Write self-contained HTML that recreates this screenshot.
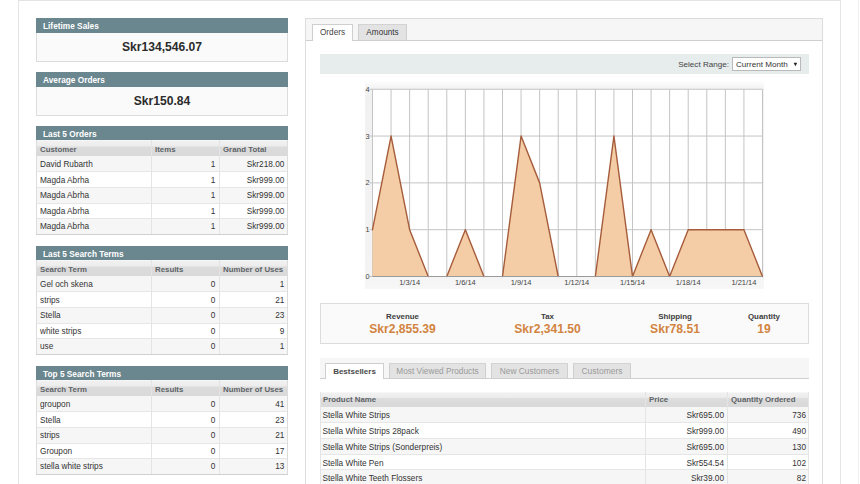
<!DOCTYPE html>
<html><head><meta charset="utf-8"><style>
html,body{margin:0;padding:0;}
html{background:#fff;}
body{width:860px;height:484px;overflow:hidden;position:relative;background:#fff;font-family:"Liberation Sans", sans-serif;}
body>div,body>svg{position:absolute;}
</style></head><body>
<div style="left:18px;top:0px;width:823px;height:1px;background:#e4e4e4"></div>
<div style="left:18px;top:0px;width:1px;height:484px;background:#e4e4e4"></div>
<div style="left:840px;top:0px;width:1px;height:484px;background:#e4e4e4"></div>
<div style="left:858px;top:0px;width:1px;height:484px;background:#f1f1f1"></div>
<div style="left:36px;top:18px;width:252px;height:15px;background:#6a868e;"></div>
<div style="top:21.57px;font-size:8.3px;line-height:8.3px;font-weight:700;color:#ffffff;white-space:nowrap;left:43px;">Lifetime Sales</div>
<div style="left:36px;top:33px;width:252px;height:29px;background:#fafafa;"></div>
<div style="left:36px;top:33px;width:1px;height:29px;background:#dcdcdc"></div>
<div style="left:287px;top:33px;width:1px;height:29px;background:#dcdcdc"></div>
<div style="left:36px;top:61px;width:252px;height:1px;background:#dcdcdc"></div>
<div style="top:40.76px;font-size:12.1px;line-height:12.1px;font-weight:700;color:#2b2b2b;white-space:nowrap;left:-38.0px;width:400px;text-align:center;">Skr134,546.07</div>
<div style="left:36px;top:72px;width:252px;height:15px;background:#6a868e;"></div>
<div style="top:75.57px;font-size:8.3px;line-height:8.3px;font-weight:700;color:#ffffff;white-space:nowrap;left:43px;">Average Orders</div>
<div style="left:36px;top:87px;width:252px;height:29px;background:#fafafa;"></div>
<div style="left:36px;top:87px;width:1px;height:29px;background:#dcdcdc"></div>
<div style="left:287px;top:87px;width:1px;height:29px;background:#dcdcdc"></div>
<div style="left:36px;top:115px;width:252px;height:1px;background:#dcdcdc"></div>
<div style="top:94.76px;font-size:12.1px;line-height:12.1px;font-weight:700;color:#2b2b2b;white-space:nowrap;left:-38.0px;width:400px;text-align:center;">Skr150.84</div>
<div style="left:36px;top:126px;width:252px;height:14px;background:#6a868e;"></div>
<div style="top:129.57px;font-size:8.3px;line-height:8.3px;font-weight:700;color:#ffffff;white-space:nowrap;left:43px;">Last 5 Orders</div>
<div style="left:36px;top:140px;width:252px;height:16px;background:linear-gradient(#fbfbfb 0%,#f0f0f0 8%,#ededed 35%,#dcdcdc 45%,#d9d9d9 100%);"></div>
<div style="top:145.55px;font-size:7.85px;line-height:7.85px;font-weight:700;color:#5d6367;white-space:nowrap;left:40px;">Customer</div>
<div style="top:145.55px;font-size:7.85px;line-height:7.85px;font-weight:700;color:#5d6367;white-space:nowrap;left:155px;">Items</div>
<div style="top:145.55px;font-size:7.85px;line-height:7.85px;font-weight:700;color:#5d6367;white-space:nowrap;left:223px;">Grand Total</div>
<div style="left:36px;top:156px;width:252px;height:16px;background:#f6f6f6;"></div>
<div style="left:36px;top:171px;width:252px;height:1px;background:#e6e6e6"></div>
<div style="top:161.02px;font-size:8.25px;line-height:8.25px;font-weight:400;color:#333333;white-space:nowrap;left:40px;">David Rubarth</div>
<div style="top:161.02px;font-size:8.25px;line-height:8.25px;font-weight:400;color:#333333;white-space:nowrap;right:644.7px;text-align:right;">1</div>
<div style="top:161.02px;font-size:8.25px;line-height:8.25px;font-weight:400;color:#333333;white-space:nowrap;right:575.7px;text-align:right;">Skr218.00</div>
<div style="left:36px;top:172px;width:252px;height:16px;background:#ffffff;"></div>
<div style="left:36px;top:187px;width:252px;height:1px;background:#e6e6e6"></div>
<div style="top:176.52px;font-size:8.25px;line-height:8.25px;font-weight:400;color:#333333;white-space:nowrap;left:40px;">Magda Abrha</div>
<div style="top:176.52px;font-size:8.25px;line-height:8.25px;font-weight:400;color:#333333;white-space:nowrap;right:644.7px;text-align:right;">1</div>
<div style="top:176.52px;font-size:8.25px;line-height:8.25px;font-weight:400;color:#333333;white-space:nowrap;right:575.7px;text-align:right;">Skr999.00</div>
<div style="left:36px;top:188px;width:252px;height:16px;background:#f6f6f6;"></div>
<div style="left:36px;top:203px;width:252px;height:1px;background:#e6e6e6"></div>
<div style="top:192.02px;font-size:8.25px;line-height:8.25px;font-weight:400;color:#333333;white-space:nowrap;left:40px;">Magda Abrha</div>
<div style="top:192.02px;font-size:8.25px;line-height:8.25px;font-weight:400;color:#333333;white-space:nowrap;right:644.7px;text-align:right;">1</div>
<div style="top:192.02px;font-size:8.25px;line-height:8.25px;font-weight:400;color:#333333;white-space:nowrap;right:575.7px;text-align:right;">Skr999.00</div>
<div style="left:36px;top:204px;width:252px;height:15px;background:#ffffff;"></div>
<div style="left:36px;top:218px;width:252px;height:1px;background:#e6e6e6"></div>
<div style="top:207.52px;font-size:8.25px;line-height:8.25px;font-weight:400;color:#333333;white-space:nowrap;left:40px;">Magda Abrha</div>
<div style="top:207.52px;font-size:8.25px;line-height:8.25px;font-weight:400;color:#333333;white-space:nowrap;right:644.7px;text-align:right;">1</div>
<div style="top:207.52px;font-size:8.25px;line-height:8.25px;font-weight:400;color:#333333;white-space:nowrap;right:575.7px;text-align:right;">Skr999.00</div>
<div style="left:36px;top:219px;width:252px;height:16px;background:#f6f6f6;"></div>
<div style="left:36px;top:234px;width:252px;height:1px;background:#e6e6e6"></div>
<div style="top:223.02px;font-size:8.25px;line-height:8.25px;font-weight:400;color:#333333;white-space:nowrap;left:40px;">Magda Abrha</div>
<div style="top:223.02px;font-size:8.25px;line-height:8.25px;font-weight:400;color:#333333;white-space:nowrap;right:644.7px;text-align:right;">1</div>
<div style="top:223.02px;font-size:8.25px;line-height:8.25px;font-weight:400;color:#333333;white-space:nowrap;right:575.7px;text-align:right;">Skr999.00</div>
<div style="left:151px;top:140px;width:1px;height:95px;background:#e3e5e5"></div>
<div style="left:219px;top:140px;width:1px;height:95px;background:#e3e5e5"></div>
<div style="left:36px;top:140px;width:1px;height:95px;background:#dcdcdc"></div>
<div style="left:287px;top:140px;width:1px;height:95px;background:#dcdcdc"></div>
<div style="left:36px;top:234px;width:252px;height:1px;background:#d0d0d0"></div>
<div style="left:36px;top:246px;width:252px;height:14px;background:#6a868e;"></div>
<div style="top:249.57px;font-size:8.3px;line-height:8.3px;font-weight:700;color:#ffffff;white-space:nowrap;left:43px;">Last 5 Search Terms</div>
<div style="left:36px;top:260px;width:252px;height:16px;background:linear-gradient(#fbfbfb 0%,#f0f0f0 8%,#ededed 35%,#dcdcdc 45%,#d9d9d9 100%);"></div>
<div style="top:265.55px;font-size:7.85px;line-height:7.85px;font-weight:700;color:#5d6367;white-space:nowrap;left:40px;">Search Term</div>
<div style="top:265.55px;font-size:7.85px;line-height:7.85px;font-weight:700;color:#5d6367;white-space:nowrap;left:155px;">Results</div>
<div style="top:265.55px;font-size:7.85px;line-height:7.85px;font-weight:700;color:#5d6367;white-space:nowrap;left:223px;">Number of Uses</div>
<div style="left:36px;top:276px;width:252px;height:16px;background:#f6f6f6;"></div>
<div style="left:36px;top:291px;width:252px;height:1px;background:#e6e6e6"></div>
<div style="top:281.02px;font-size:8.25px;line-height:8.25px;font-weight:400;color:#333333;white-space:nowrap;left:40px;">Gel och skena</div>
<div style="top:281.02px;font-size:8.25px;line-height:8.25px;font-weight:400;color:#333333;white-space:nowrap;right:644.7px;text-align:right;">0</div>
<div style="top:281.02px;font-size:8.25px;line-height:8.25px;font-weight:400;color:#333333;white-space:nowrap;right:575.7px;text-align:right;">1</div>
<div style="left:36px;top:292px;width:252px;height:16px;background:#ffffff;"></div>
<div style="left:36px;top:307px;width:252px;height:1px;background:#e6e6e6"></div>
<div style="top:296.52px;font-size:8.25px;line-height:8.25px;font-weight:400;color:#333333;white-space:nowrap;left:40px;">strips</div>
<div style="top:296.52px;font-size:8.25px;line-height:8.25px;font-weight:400;color:#333333;white-space:nowrap;right:644.7px;text-align:right;">0</div>
<div style="top:296.52px;font-size:8.25px;line-height:8.25px;font-weight:400;color:#333333;white-space:nowrap;right:575.7px;text-align:right;">21</div>
<div style="left:36px;top:308px;width:252px;height:16px;background:#f6f6f6;"></div>
<div style="left:36px;top:323px;width:252px;height:1px;background:#e6e6e6"></div>
<div style="top:312.02px;font-size:8.25px;line-height:8.25px;font-weight:400;color:#333333;white-space:nowrap;left:40px;">Stella</div>
<div style="top:312.02px;font-size:8.25px;line-height:8.25px;font-weight:400;color:#333333;white-space:nowrap;right:644.7px;text-align:right;">0</div>
<div style="top:312.02px;font-size:8.25px;line-height:8.25px;font-weight:400;color:#333333;white-space:nowrap;right:575.7px;text-align:right;">23</div>
<div style="left:36px;top:324px;width:252px;height:15px;background:#ffffff;"></div>
<div style="left:36px;top:338px;width:252px;height:1px;background:#e6e6e6"></div>
<div style="top:327.52px;font-size:8.25px;line-height:8.25px;font-weight:400;color:#333333;white-space:nowrap;left:40px;">white strips</div>
<div style="top:327.52px;font-size:8.25px;line-height:8.25px;font-weight:400;color:#333333;white-space:nowrap;right:644.7px;text-align:right;">0</div>
<div style="top:327.52px;font-size:8.25px;line-height:8.25px;font-weight:400;color:#333333;white-space:nowrap;right:575.7px;text-align:right;">9</div>
<div style="left:36px;top:339px;width:252px;height:16px;background:#f6f6f6;"></div>
<div style="left:36px;top:354px;width:252px;height:1px;background:#e6e6e6"></div>
<div style="top:343.02px;font-size:8.25px;line-height:8.25px;font-weight:400;color:#333333;white-space:nowrap;left:40px;">use</div>
<div style="top:343.02px;font-size:8.25px;line-height:8.25px;font-weight:400;color:#333333;white-space:nowrap;right:644.7px;text-align:right;">0</div>
<div style="top:343.02px;font-size:8.25px;line-height:8.25px;font-weight:400;color:#333333;white-space:nowrap;right:575.7px;text-align:right;">1</div>
<div style="left:151px;top:260px;width:1px;height:95px;background:#e3e5e5"></div>
<div style="left:219px;top:260px;width:1px;height:95px;background:#e3e5e5"></div>
<div style="left:36px;top:260px;width:1px;height:95px;background:#dcdcdc"></div>
<div style="left:287px;top:260px;width:1px;height:95px;background:#dcdcdc"></div>
<div style="left:36px;top:354px;width:252px;height:1px;background:#d0d0d0"></div>
<div style="left:36px;top:366px;width:252px;height:14px;background:#6a868e;"></div>
<div style="top:369.57px;font-size:8.3px;line-height:8.3px;font-weight:700;color:#ffffff;white-space:nowrap;left:43px;">Top 5 Search Terms</div>
<div style="left:36px;top:380px;width:252px;height:16px;background:linear-gradient(#fbfbfb 0%,#f0f0f0 8%,#ededed 35%,#dcdcdc 45%,#d9d9d9 100%);"></div>
<div style="top:385.55px;font-size:7.85px;line-height:7.85px;font-weight:700;color:#5d6367;white-space:nowrap;left:40px;">Search Term</div>
<div style="top:385.55px;font-size:7.85px;line-height:7.85px;font-weight:700;color:#5d6367;white-space:nowrap;left:155px;">Results</div>
<div style="top:385.55px;font-size:7.85px;line-height:7.85px;font-weight:700;color:#5d6367;white-space:nowrap;left:223px;">Number of Uses</div>
<div style="left:36px;top:396px;width:252px;height:16px;background:#f6f6f6;"></div>
<div style="left:36px;top:411px;width:252px;height:1px;background:#e6e6e6"></div>
<div style="top:401.02px;font-size:8.25px;line-height:8.25px;font-weight:400;color:#333333;white-space:nowrap;left:40px;">groupon</div>
<div style="top:401.02px;font-size:8.25px;line-height:8.25px;font-weight:400;color:#333333;white-space:nowrap;right:644.7px;text-align:right;">0</div>
<div style="top:401.02px;font-size:8.25px;line-height:8.25px;font-weight:400;color:#333333;white-space:nowrap;right:575.7px;text-align:right;">41</div>
<div style="left:36px;top:412px;width:252px;height:16px;background:#ffffff;"></div>
<div style="left:36px;top:427px;width:252px;height:1px;background:#e6e6e6"></div>
<div style="top:416.52px;font-size:8.25px;line-height:8.25px;font-weight:400;color:#333333;white-space:nowrap;left:40px;">Stella</div>
<div style="top:416.52px;font-size:8.25px;line-height:8.25px;font-weight:400;color:#333333;white-space:nowrap;right:644.7px;text-align:right;">0</div>
<div style="top:416.52px;font-size:8.25px;line-height:8.25px;font-weight:400;color:#333333;white-space:nowrap;right:575.7px;text-align:right;">23</div>
<div style="left:36px;top:428px;width:252px;height:16px;background:#f6f6f6;"></div>
<div style="left:36px;top:443px;width:252px;height:1px;background:#e6e6e6"></div>
<div style="top:432.02px;font-size:8.25px;line-height:8.25px;font-weight:400;color:#333333;white-space:nowrap;left:40px;">strips</div>
<div style="top:432.02px;font-size:8.25px;line-height:8.25px;font-weight:400;color:#333333;white-space:nowrap;right:644.7px;text-align:right;">0</div>
<div style="top:432.02px;font-size:8.25px;line-height:8.25px;font-weight:400;color:#333333;white-space:nowrap;right:575.7px;text-align:right;">21</div>
<div style="left:36px;top:444px;width:252px;height:15px;background:#ffffff;"></div>
<div style="left:36px;top:458px;width:252px;height:1px;background:#e6e6e6"></div>
<div style="top:447.52px;font-size:8.25px;line-height:8.25px;font-weight:400;color:#333333;white-space:nowrap;left:40px;">Groupon</div>
<div style="top:447.52px;font-size:8.25px;line-height:8.25px;font-weight:400;color:#333333;white-space:nowrap;right:644.7px;text-align:right;">0</div>
<div style="top:447.52px;font-size:8.25px;line-height:8.25px;font-weight:400;color:#333333;white-space:nowrap;right:575.7px;text-align:right;">17</div>
<div style="left:36px;top:459px;width:252px;height:16px;background:#f6f6f6;"></div>
<div style="left:36px;top:474px;width:252px;height:1px;background:#e6e6e6"></div>
<div style="top:463.02px;font-size:8.25px;line-height:8.25px;font-weight:400;color:#333333;white-space:nowrap;left:40px;">stella white strips</div>
<div style="top:463.02px;font-size:8.25px;line-height:8.25px;font-weight:400;color:#333333;white-space:nowrap;right:644.7px;text-align:right;">0</div>
<div style="top:463.02px;font-size:8.25px;line-height:8.25px;font-weight:400;color:#333333;white-space:nowrap;right:575.7px;text-align:right;">13</div>
<div style="left:151px;top:380px;width:1px;height:95px;background:#e3e5e5"></div>
<div style="left:219px;top:380px;width:1px;height:95px;background:#e3e5e5"></div>
<div style="left:36px;top:380px;width:1px;height:95px;background:#dcdcdc"></div>
<div style="left:287px;top:380px;width:1px;height:95px;background:#dcdcdc"></div>
<div style="left:36px;top:474px;width:252px;height:1px;background:#d0d0d0"></div>
<div style="left:305px;top:18px;width:518px;height:466px;background:#ffffff;"></div>
<div style="left:305px;top:18px;width:1px;height:466px;background:#dcdcdc"></div>
<div style="left:822px;top:18px;width:1px;height:466px;background:#dcdcdc"></div>
<div style="left:305px;top:18px;width:518px;height:1px;background:#dcdcdc"></div>
<div style="left:306px;top:19px;width:516px;height:21px;background:#f6f6f6;"></div>
<div style="left:306px;top:40px;width:516px;height:1px;background:#cfcfcf"></div>
<div style="left:312px;top:24px;width:41px;height:17px;background:#ffffff;"></div>
<div style="left:312px;top:24px;width:1px;height:17px;background:#cfcfcf"></div>
<div style="left:352px;top:24px;width:1px;height:17px;background:#cfcfcf"></div>
<div style="left:312px;top:24px;width:41px;height:1px;background:#cfcfcf"></div>
<div style="top:28.86px;font-size:8.2px;line-height:8.2px;font-weight:400;color:#444;white-space:nowrap;left:132.5px;width:400px;text-align:center;">Orders</div>
<div style="left:358px;top:24px;width:49px;height:16px;background:#e3e3e3;"></div>
<div style="left:358px;top:24px;width:1px;height:16px;background:#cfcfcf"></div>
<div style="left:406px;top:24px;width:1px;height:16px;background:#cfcfcf"></div>
<div style="left:358px;top:24px;width:49px;height:1px;background:#d3d3d3"></div>
<div style="top:28.86px;font-size:8.2px;line-height:8.2px;font-weight:400;color:#333;white-space:nowrap;left:182.5px;width:400px;text-align:center;">Amounts</div>
<div style="left:320px;top:54px;width:489px;height:20px;background:#e7eced;"></div>
<div style="top:60.64px;font-size:8.1px;line-height:8.1px;font-weight:400;color:#444;white-space:nowrap;right:131px;text-align:right;">Select Range:</div>
<div style="left:732px;top:57px;width:69px;height:14px;background:#ffffff;box-shadow:inset 0 0 0 1px #b9b9b9;"></div>
<div style="top:60.64px;font-size:8.1px;line-height:8.1px;font-weight:400;color:#333;white-space:nowrap;left:736px;">Current Month</div>
<svg width="8" height="8" style="left:791px;top:61px"><polygon points="2.6,1.8 6.2,1.8 4.4,5.2" fill="#222"/></svg>
<svg width="399" height="209" viewBox="365 80 399 209" style="left:365px;top:80px;position:absolute;"><defs><linearGradient id="cg" x1="0" y1="0" x2="0" y2="1"><stop offset="0" stop-color="#ffffff"/><stop offset="0.045" stop-color="#f1f1f1"/><stop offset="0.9" stop-color="#f3f3f3"/><stop offset="1" stop-color="#f7f7f7"/></linearGradient></defs><rect x="365" y="80" width="399" height="209" fill="url(#cg)"/><rect x="372.5" y="89.25" width="390.0" height="187.25" fill="#ffffff"/><line x1="372.50" y1="89.25" x2="372.50" y2="276.5" stroke="#c4c4c4" stroke-width="1"/><line x1="391.07" y1="89.25" x2="391.07" y2="276.5" stroke="#c4c4c4" stroke-width="1"/><line x1="409.64" y1="89.25" x2="409.64" y2="276.5" stroke="#c4c4c4" stroke-width="1"/><line x1="428.21" y1="89.25" x2="428.21" y2="276.5" stroke="#c4c4c4" stroke-width="1"/><line x1="446.79" y1="89.25" x2="446.79" y2="276.5" stroke="#c4c4c4" stroke-width="1"/><line x1="465.36" y1="89.25" x2="465.36" y2="276.5" stroke="#c4c4c4" stroke-width="1"/><line x1="483.93" y1="89.25" x2="483.93" y2="276.5" stroke="#c4c4c4" stroke-width="1"/><line x1="502.50" y1="89.25" x2="502.50" y2="276.5" stroke="#c4c4c4" stroke-width="1"/><line x1="521.07" y1="89.25" x2="521.07" y2="276.5" stroke="#c4c4c4" stroke-width="1"/><line x1="539.64" y1="89.25" x2="539.64" y2="276.5" stroke="#c4c4c4" stroke-width="1"/><line x1="558.21" y1="89.25" x2="558.21" y2="276.5" stroke="#c4c4c4" stroke-width="1"/><line x1="576.79" y1="89.25" x2="576.79" y2="276.5" stroke="#c4c4c4" stroke-width="1"/><line x1="595.36" y1="89.25" x2="595.36" y2="276.5" stroke="#c4c4c4" stroke-width="1"/><line x1="613.93" y1="89.25" x2="613.93" y2="276.5" stroke="#c4c4c4" stroke-width="1"/><line x1="632.50" y1="89.25" x2="632.50" y2="276.5" stroke="#c4c4c4" stroke-width="1"/><line x1="651.07" y1="89.25" x2="651.07" y2="276.5" stroke="#c4c4c4" stroke-width="1"/><line x1="669.64" y1="89.25" x2="669.64" y2="276.5" stroke="#c4c4c4" stroke-width="1"/><line x1="688.21" y1="89.25" x2="688.21" y2="276.5" stroke="#c4c4c4" stroke-width="1"/><line x1="706.79" y1="89.25" x2="706.79" y2="276.5" stroke="#c4c4c4" stroke-width="1"/><line x1="725.36" y1="89.25" x2="725.36" y2="276.5" stroke="#c4c4c4" stroke-width="1"/><line x1="743.93" y1="89.25" x2="743.93" y2="276.5" stroke="#c4c4c4" stroke-width="1"/><line x1="762.50" y1="89.25" x2="762.50" y2="276.5" stroke="#c4c4c4" stroke-width="1"/><line x1="369.5" y1="276.50" x2="762.5" y2="276.50" stroke="#c4c4c4" stroke-width="1"/><line x1="369.5" y1="229.69" x2="762.5" y2="229.69" stroke="#c4c4c4" stroke-width="1"/><line x1="369.5" y1="182.88" x2="762.5" y2="182.88" stroke="#c4c4c4" stroke-width="1"/><line x1="369.5" y1="136.06" x2="762.5" y2="136.06" stroke="#c4c4c4" stroke-width="1"/><line x1="369.5" y1="89.25" x2="762.5" y2="89.25" stroke="#c4c4c4" stroke-width="1"/><polygon points="372.5,276.5 372.50,229.69 391.07,136.06 409.64,229.69 428.21,276.50 446.79,276.50 465.36,229.69 483.93,276.50 502.50,276.50 521.07,136.06 539.64,182.88 558.21,276.50 576.79,276.50 595.36,276.50 613.93,136.06 632.50,276.50 651.07,229.69 669.64,276.50 688.21,229.69 706.79,229.69 725.36,229.69 743.93,229.69 762.50,276.50 762.5,276.5" fill="#f4cca5"/><path d="M372.50 229.69L391.07 136.06M391.07 136.06L409.64 229.69M409.64 229.69L428.21 276.50M446.79 276.50L465.36 229.69M465.36 229.69L483.93 276.50M502.50 276.50L521.07 136.06M521.07 136.06L539.64 182.88M539.64 182.88L558.21 276.50M595.36 276.50L613.93 136.06M613.93 136.06L632.50 276.50M632.50 276.50L651.07 229.69M651.07 229.69L669.64 276.50M669.64 276.50L688.21 229.69M688.21 229.69L706.79 229.69M706.79 229.69L725.36 229.69M725.36 229.69L743.93 229.69M743.93 229.69L762.50 276.50" fill="none" stroke="#a55c3b" stroke-width="1.4" stroke-linecap="round"/><text x="369.5" y="279.00" font-family="Liberation Sans" font-size="7.3" fill="#444" text-anchor="end">0</text><text x="369.5" y="232.19" font-family="Liberation Sans" font-size="7.3" fill="#444" text-anchor="end">1</text><text x="369.5" y="185.38" font-family="Liberation Sans" font-size="7.3" fill="#444" text-anchor="end">2</text><text x="369.5" y="138.56" font-family="Liberation Sans" font-size="7.3" fill="#444" text-anchor="end">3</text><text x="369.5" y="91.75" font-family="Liberation Sans" font-size="7.3" fill="#444" text-anchor="end">4</text><text x="409.64" y="285.4" font-family="Liberation Sans" font-size="7.5" fill="#444" text-anchor="middle">1/3/14</text><text x="465.36" y="285.4" font-family="Liberation Sans" font-size="7.5" fill="#444" text-anchor="middle">1/6/14</text><text x="521.07" y="285.4" font-family="Liberation Sans" font-size="7.5" fill="#444" text-anchor="middle">1/9/14</text><text x="576.79" y="285.4" font-family="Liberation Sans" font-size="7.5" fill="#444" text-anchor="middle">1/12/14</text><text x="632.50" y="285.4" font-family="Liberation Sans" font-size="7.5" fill="#444" text-anchor="middle">1/15/14</text><text x="688.21" y="285.4" font-family="Liberation Sans" font-size="7.5" fill="#444" text-anchor="middle">1/18/14</text><text x="743.93" y="285.4" font-family="Liberation Sans" font-size="7.5" fill="#444" text-anchor="middle">1/21/14</text><line x1="372.5" y1="276.5" x2="762.5" y2="276.5" stroke="#9a9a9a" stroke-width="1"/></svg>
<div style="left:320px;top:303px;width:489px;height:41px;background:#fafafa;box-shadow:inset 0 0 0 1px #dcdcdc;"></div>
<div style="top:312.81px;font-size:7.9px;line-height:7.9px;font-weight:700;color:#3d3d3d;white-space:nowrap;left:202.5px;width:400px;text-align:center;">Revenue</div>
<div style="top:322.76px;font-size:12.1px;line-height:12.1px;font-weight:700;color:#d2843f;white-space:nowrap;left:202.5px;width:400px;text-align:center;">Skr2,855.39</div>
<div style="top:312.81px;font-size:7.9px;line-height:7.9px;font-weight:700;color:#3d3d3d;white-space:nowrap;left:347.5px;width:400px;text-align:center;">Tax</div>
<div style="top:322.76px;font-size:12.1px;line-height:12.1px;font-weight:700;color:#d2843f;white-space:nowrap;left:347.5px;width:400px;text-align:center;">Skr2,341.50</div>
<div style="top:312.81px;font-size:7.9px;line-height:7.9px;font-weight:700;color:#3d3d3d;white-space:nowrap;left:475px;width:400px;text-align:center;">Shipping</div>
<div style="top:322.76px;font-size:12.1px;line-height:12.1px;font-weight:700;color:#d2843f;white-space:nowrap;left:475px;width:400px;text-align:center;">Skr78.51</div>
<div style="top:312.81px;font-size:7.9px;line-height:7.9px;font-weight:700;color:#3d3d3d;white-space:nowrap;left:564px;width:400px;text-align:center;">Quantity</div>
<div style="top:322.76px;font-size:12.1px;line-height:12.1px;font-weight:700;color:#d2843f;white-space:nowrap;left:564px;width:400px;text-align:center;">19</div>
<div style="left:320px;top:358px;width:489px;height:21px;background:#f6f6f6;"></div>
<div style="left:320px;top:378px;width:489px;height:1px;background:#cfcfcf"></div>
<div style="left:325px;top:363px;width:59px;height:16px;background:#ffffff;"></div>
<div style="left:325px;top:363px;width:1px;height:16px;background:#cfcfcf"></div>
<div style="left:383px;top:363px;width:1px;height:16px;background:#cfcfcf"></div>
<div style="left:325px;top:363px;width:59px;height:1px;background:#cfcfcf"></div>
<div style="top:367.53px;font-size:8.0px;line-height:8.0px;font-weight:700;color:#4a4a4a;white-space:nowrap;left:154.5px;width:400px;text-align:center;">Bestsellers</div>
<div style="left:389px;top:363px;width:97px;height:15px;background:#e3e3e3;"></div>
<div style="left:389px;top:363px;width:1px;height:15px;background:#cfcfcf"></div>
<div style="left:485px;top:363px;width:1px;height:15px;background:#cfcfcf"></div>
<div style="left:389px;top:363px;width:97px;height:1px;background:#d3d3d3"></div>
<div style="top:366.77px;font-size:8.3px;line-height:8.3px;font-weight:400;color:#9a9a9a;white-space:nowrap;left:237.5px;width:400px;text-align:center;">Most Viewed Products</div>
<div style="left:491px;top:363px;width:77px;height:15px;background:#e3e3e3;"></div>
<div style="left:491px;top:363px;width:1px;height:15px;background:#cfcfcf"></div>
<div style="left:567px;top:363px;width:1px;height:15px;background:#cfcfcf"></div>
<div style="left:491px;top:363px;width:77px;height:1px;background:#d3d3d3"></div>
<div style="top:366.69px;font-size:8.4px;line-height:8.4px;font-weight:400;color:#9a9a9a;white-space:nowrap;left:329.5px;width:400px;text-align:center;">New Customers</div>
<div style="left:573px;top:363px;width:58px;height:15px;background:#e3e3e3;"></div>
<div style="left:573px;top:363px;width:1px;height:15px;background:#cfcfcf"></div>
<div style="left:630px;top:363px;width:1px;height:15px;background:#cfcfcf"></div>
<div style="left:573px;top:363px;width:58px;height:1px;background:#d3d3d3"></div>
<div style="top:366.60px;font-size:8.5px;line-height:8.5px;font-weight:400;color:#9a9a9a;white-space:nowrap;left:402.0px;width:400px;text-align:center;">Customers</div>
<div style="left:320px;top:392px;width:489px;height:15.399999999999977px;background:linear-gradient(#fbfbfb 0%,#f0f0f0 8%,#ededed 35%,#dcdcdc 45%,#d9d9d9 100%);"></div>
<div style="top:396.25px;font-size:7.85px;line-height:7.85px;font-weight:700;color:#5d6367;white-space:nowrap;left:323px;">Product Name</div>
<div style="top:396.25px;font-size:7.85px;line-height:7.85px;font-weight:700;color:#5d6367;white-space:nowrap;left:649px;">Price</div>
<div style="top:396.25px;font-size:7.85px;line-height:7.85px;font-weight:700;color:#5d6367;white-space:nowrap;left:731px;">Quantity Ordered</div>
<div style="left:320px;top:407px;width:489px;height:16px;background:#f6f6f6;"></div>
<div style="left:320px;top:422px;width:489px;height:1px;background:#e6e6e6"></div>
<div style="top:412.12px;font-size:8.25px;line-height:8.25px;font-weight:400;color:#333333;white-space:nowrap;left:322.5px;">Stella White Strips</div>
<div style="top:412.12px;font-size:8.25px;line-height:8.25px;font-weight:400;color:#333333;white-space:nowrap;right:136px;text-align:right;">Skr695.00</div>
<div style="top:412.12px;font-size:8.25px;line-height:8.25px;font-weight:400;color:#333333;white-space:nowrap;right:54px;text-align:right;">736</div>
<div style="left:320px;top:423px;width:489px;height:16px;background:#ffffff;"></div>
<div style="left:320px;top:438px;width:489px;height:1px;background:#e6e6e6"></div>
<div style="top:428.12px;font-size:8.25px;line-height:8.25px;font-weight:400;color:#333333;white-space:nowrap;left:322.5px;">Stella White Strips 28pack</div>
<div style="top:428.12px;font-size:8.25px;line-height:8.25px;font-weight:400;color:#333333;white-space:nowrap;right:136px;text-align:right;">Skr999.00</div>
<div style="top:428.12px;font-size:8.25px;line-height:8.25px;font-weight:400;color:#333333;white-space:nowrap;right:54px;text-align:right;">490</div>
<div style="left:320px;top:439px;width:489px;height:16px;background:#f6f6f6;"></div>
<div style="left:320px;top:454px;width:489px;height:1px;background:#e6e6e6"></div>
<div style="top:444.12px;font-size:8.25px;line-height:8.25px;font-weight:400;color:#333333;white-space:nowrap;left:322.5px;">Stella White Strips (Sonderpreis)</div>
<div style="top:444.12px;font-size:8.25px;line-height:8.25px;font-weight:400;color:#333333;white-space:nowrap;right:136px;text-align:right;">Skr695.00</div>
<div style="top:444.12px;font-size:8.25px;line-height:8.25px;font-weight:400;color:#333333;white-space:nowrap;right:54px;text-align:right;">130</div>
<div style="left:320px;top:455px;width:489px;height:15px;background:#ffffff;"></div>
<div style="left:320px;top:469px;width:489px;height:1px;background:#e6e6e6"></div>
<div style="top:460.12px;font-size:8.25px;line-height:8.25px;font-weight:400;color:#333333;white-space:nowrap;left:322.5px;">Stella White Pen</div>
<div style="top:460.12px;font-size:8.25px;line-height:8.25px;font-weight:400;color:#333333;white-space:nowrap;right:136px;text-align:right;">Skr554.54</div>
<div style="top:460.12px;font-size:8.25px;line-height:8.25px;font-weight:400;color:#333333;white-space:nowrap;right:54px;text-align:right;">102</div>
<div style="left:320px;top:470px;width:489px;height:16px;background:#f6f6f6;"></div>
<div style="left:320px;top:485px;width:489px;height:1px;background:#e6e6e6"></div>
<div style="top:475.12px;font-size:8.25px;line-height:8.25px;font-weight:400;color:#333333;white-space:nowrap;left:322.5px;">Stella White Teeth Flossers</div>
<div style="top:475.12px;font-size:8.25px;line-height:8.25px;font-weight:400;color:#333333;white-space:nowrap;right:136px;text-align:right;">Skr39.00</div>
<div style="top:475.12px;font-size:8.25px;line-height:8.25px;font-weight:400;color:#333333;white-space:nowrap;right:54px;text-align:right;">82</div>
<div style="left:645px;top:392px;width:1px;height:92px;background:#e3e5e5"></div>
<div style="left:727px;top:392px;width:1px;height:92px;background:#e3e5e5"></div>
<div style="left:320px;top:392px;width:1px;height:92px;background:#e4e4e4"></div>
<div style="left:808px;top:392px;width:1px;height:92px;background:#e4e4e4"></div>
</body></html>
